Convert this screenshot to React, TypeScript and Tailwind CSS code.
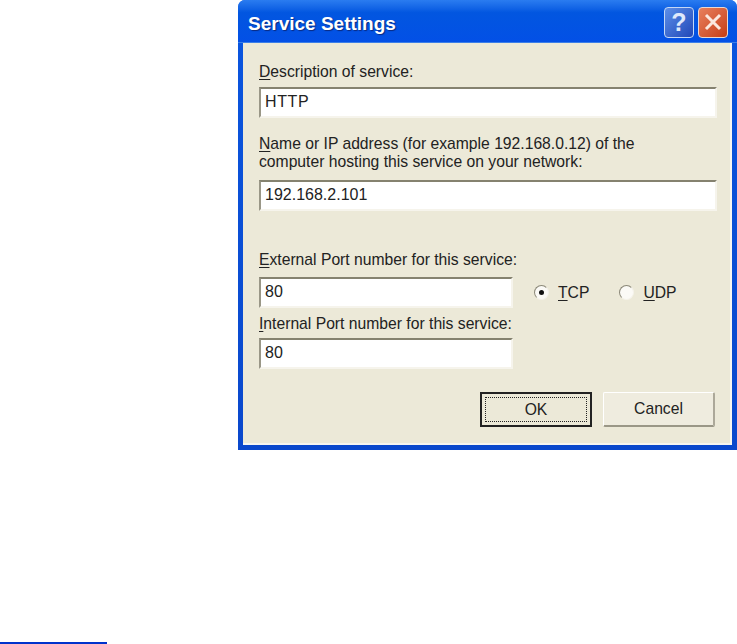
const font = { fontFamily: '"Liberation Sans", Arial, sans-serif' };

function Field({ value, className }: { value: string; className: string }) {
  return (
    <div
      className={`${className} flex items-center border-t-2 border-l-2 border-t-[#85826f] border-l-[#9a9787] border-r-2 border-b-2 border-r-[#f6f4ec] border-b-[#f6f4ec] bg-white pb-[2px] pl-[4px] text-[16px] text-[#222]`}
    >
      {value}
    </div>
  );
}

function Radio({ checked, mark, rest }: { checked?: boolean; mark: string; rest: string }) {
  return (
    <div className="flex items-center gap-[9px] text-[15.7px] text-[#222]">
      <span className="flex h-[15px] w-[15px] items-center justify-center rounded-full border border-t-[#8b8878] border-l-[#8b8878] border-r-[#f4f2ea] border-b-[#f4f2ea] bg-[#fbfaf6]">
        {checked && <span className="h-[5px] w-[5px] rounded-full bg-[#111]" />}
      </span>
      <span>
        <span className="underline underline-offset-2">{mark}</span>
        {rest}
      </span>
    </div>
  );
}

export default function App() {
  return (
    <div className="flex h-[644px] flex-col justify-between overflow-hidden bg-white" style={font}>
      <div className="ml-[238px] flex h-[450px] w-[499px] flex-col rounded-t-[7px] bg-gradient-to-b from-[#0a56e0] to-[#0a48cc]">
        <div className="flex h-[43px] shrink-0 items-center justify-between rounded-t-[7px] border-b border-b-[#3b7fe8] bg-gradient-to-b from-[#2a7cf0] from-0% via-[#0256e0] via-30% to-[#0350e6] pl-[10px] pr-[9px]">
          <span className="pt-[6px] text-[19px] font-bold text-white [text-shadow:1px_1px_1px_#0a2a80]">
            Service Settings
          </span>
          <div className="flex gap-[4px] pt-[2px]">
            <button className="flex h-[31px] w-[30px] items-center justify-center rounded-[4px] border border-[#c4d8f6] bg-gradient-to-br from-[#5d8fe8] to-[#2347b8] text-[25px] font-bold leading-none text-[#dfe9fb]">
              ?
            </button>
            <button className="flex h-[31px] w-[30px] items-center justify-center rounded-[4px] border border-[#ead8d0] bg-gradient-to-br from-[#e8805c] to-[#c63c10]">
              <svg width="20" height="20" viewBox="0 0 20 20" fill="none" stroke="#fbe9df" strokeWidth="3">
                <path d="M3 3l14 14M17 3L3 17" />
              </svg>
            </button>
          </div>
        </div>
        <div className="mx-[5px] flex h-[402px] flex-col border-r-2 border-b-2 border-r-[#f7f6f0] border-b-[#f7f6f0] bg-[#ece9d8] pl-[16px] pr-[13px] text-[15.7px] leading-[18px] text-[#222]">
          <div className="mt-[20px]">
            <span className="underline underline-offset-2">D</span>escription of service:
          </div>
          <Field value="HTTP" className="mt-[6px] h-[31px] tracking-[0.6px]" />
          <div className="mt-[17px]">
            <span className="underline underline-offset-2">N</span>ame or IP address (for example 192.168.0.12) of the
            <br />
            computer hosting this service on your network:
          </div>
          <Field value="192.168.2.101" className="mt-[9px] h-[31px]" />
          <div className="mt-[40px]">
            <span className="underline underline-offset-2">E</span>xternal Port number for this service:
          </div>
          <div className="mt-[8px] flex items-center">
            <Field value="80" className="h-[31px] w-[254px]" />
            <div className="ml-[21px] flex gap-[30px]">
              <Radio checked mark="T" rest="CP" />
              <Radio mark="U" rest="DP" />
            </div>
          </div>
          <div className="mt-[7px]">
            <span className="underline underline-offset-2">I</span>nternal Port number for this service:
          </div>
          <Field value="80" className="mt-[5px] h-[31px] w-[254px]" />
          <div className="mr-[2px] mt-[23px] flex justify-end gap-[11px]">
            <button className="flex h-[35px] w-[112px] items-center justify-center border-2 border-[#222] bg-[#ece9d8] p-[3px]">
              <span className="flex h-full w-full items-center justify-center border border-dotted border-[#222]">
                OK
              </span>
            </button>
            <button className="flex h-[35px] w-[112px] items-center justify-center rounded-[2px] border-r-2 border-b-2 border-r-[#aca899] border-b-[#9a9787] border-t border-l border-t-white border-l-white bg-[#efecdf]">
              Cancel
            </button>
          </div>
        </div>
      </div>
      <div className="h-[2px] w-[107px] bg-[#0033cc]" />
    </div>
  );
}
